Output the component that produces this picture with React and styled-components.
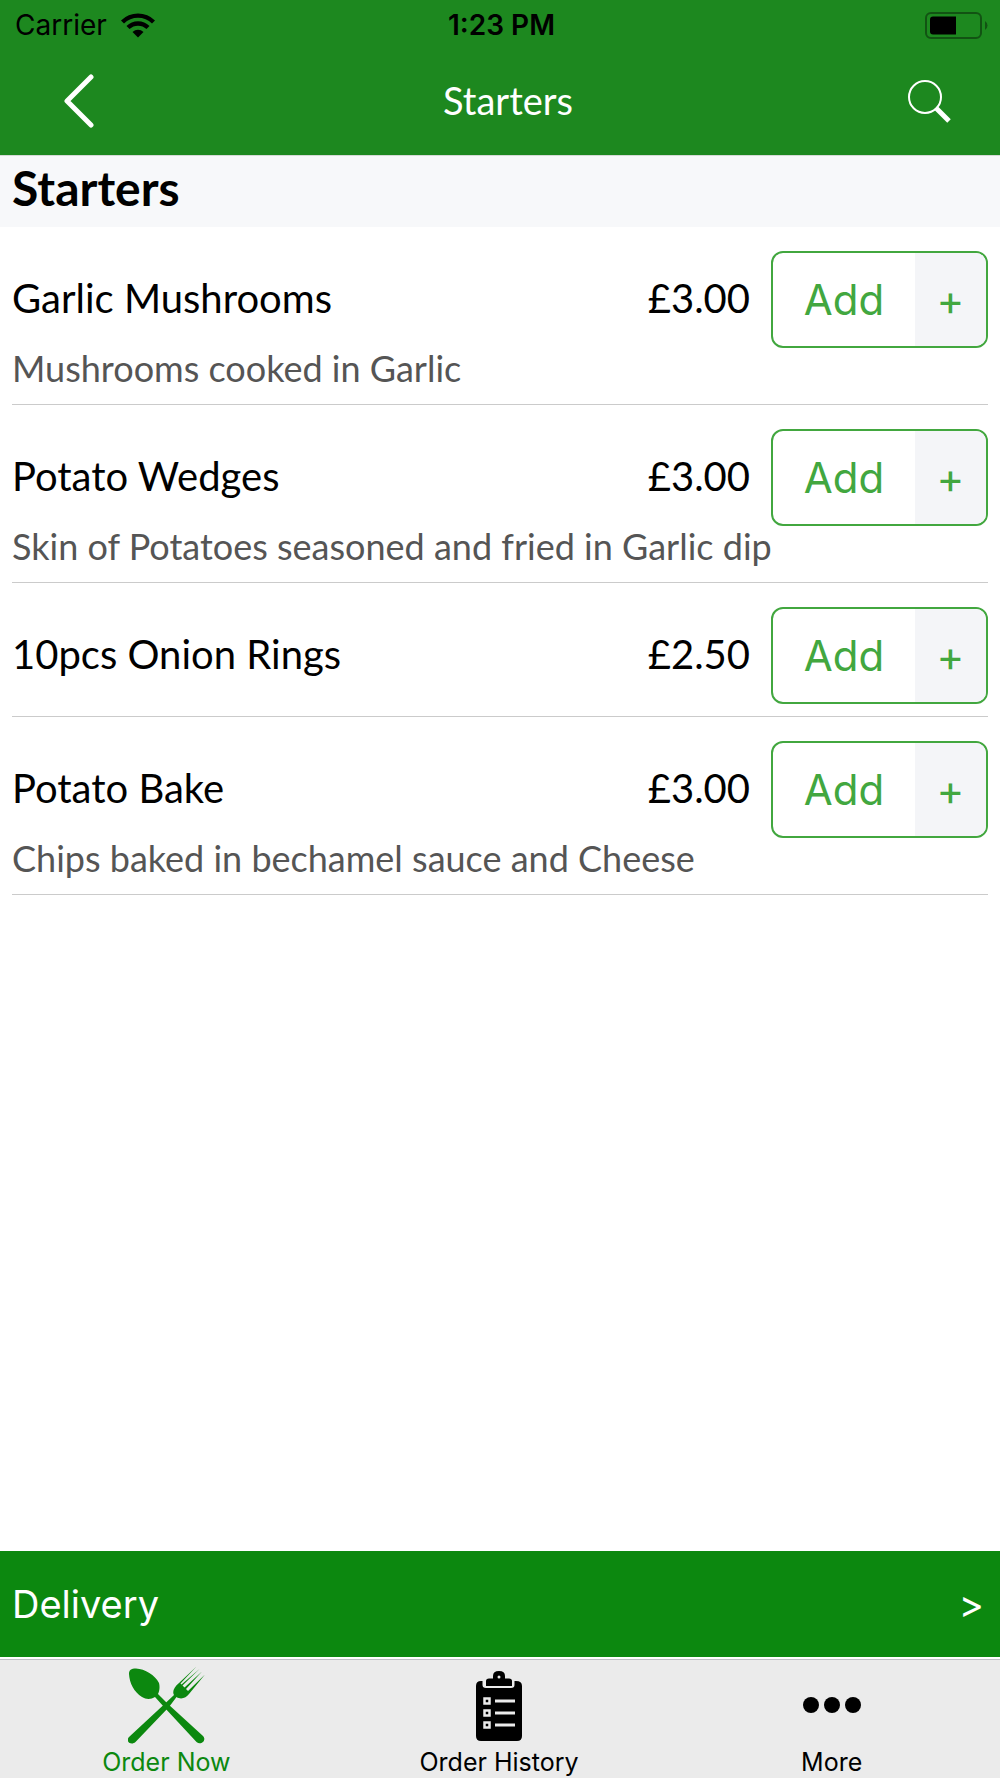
import { useState } from "react";
import styled, { createGlobalStyle } from "styled-components";

const GlobalStyle = createGlobalStyle`
  * {
    box-sizing: border-box;
  }
  body {
    margin: 0;
    background: #fff;
    color: #000;
    font-family: Lato, sans-serif;
  }
  button {
    margin: 0;
    padding: 0;
    border: 0;
    background: none;
    color: inherit;
    font-family: inherit;
    cursor: pointer;
  }
  svg {
    display: block;
  }
`

const Page = styled.div`
  display: flex;
  flex-direction: column;
  min-height: 100vh;
`
const Header = styled.header`
  background: #1d881f;
  border-bottom: 1px solid #d5dad6;
`
const StatusBar = styled.div`
  display: grid;
  grid-template-columns: 1fr auto 1fr;
  align-items: center;
  height: 51px;
  padding: 0 12px 0 15px;
  font-family: Inter, sans-serif;
  font-size: 28px;
  line-height: 51px;
`
const Carrier = styled.div`
  display: flex;
  align-items: center;
  gap: 14px;
`
const Time = styled.time`
  font-weight: 600;
`
const Battery = styled.div`
  justify-self: end;
`
const NavBar = styled.div`
  display: grid;
  grid-template-columns: 158px 1fr 142px;
  align-items: center;
  height: 104px;
  padding-bottom: 4px;
`
const NavButton = styled.button`
  display: flex;
  align-items: center;
  justify-content: center;
  height: 100%;
`
const NavTitle = styled.h1`
  margin: 0;
  padding-bottom: 2px;
  color: #fff;
  font-size: 38px;
  font-weight: 400;
  line-height: 48px;
  text-align: center;
`
const SectionTitle = styled.h2`
  margin: 0;
  padding: 0 12px 7px;
  background: #f7f8fa;
  font-size: 48px;
  font-weight: 700;
  line-height: 64px;
`
const Menu = styled.ul`
  flex: 1;
  margin: 0;
  padding: 0 12px;
  list-style: none;
`
const Item = styled.li`
  padding: 24px 0 12px;
  border-bottom: 1px solid #cbcbcb;
`
const ItemRow = styled.div`
  display: flex;
  align-items: center;
`
const ItemName = styled.h3`
  flex: 1;
  margin: 0;
  padding-bottom: 4px;
  font-size: 40px;
  font-weight: 400;
  line-height: 48px;
`
const Price = styled.span`
  margin-right: 21px;
  padding-bottom: 4px;
  font-size: 40px;
  line-height: 48px;
`
const Description = styled.p`
  margin: 0;
  padding-bottom: 3px;
  color: #555;
  font-size: 36px;
  line-height: 41px;
`
const AddButton = styled.button`
  display: grid;
  grid-template-columns: 1fr 71px;
  width: 217px;
  height: 97px;
  overflow: hidden;
  border: 2px solid #42a73f;
  border-radius: 12px;
  background: #fff;
  color: #42a73f;
  font-family: Inter, sans-serif;
  font-size: 42px;
  line-height: 93px;
`
const Plus = styled.span`
  background: #f4f5f8;
`
const DeliveryBar = styled.button`
  display: flex;
  align-items: center;
  justify-content: space-between;
  height: 106px;
  padding: 0 16px 0 12px;
  background: #0c880f;
  color: #fff;
  font-family: Inter, sans-serif;
  font-size: 38px;
`
const TabBar = styled.nav`
  display: grid;
  grid-template-columns: repeat(3, 1fr);
  margin-top: 2px;
  padding-right: 2px;
  border-top: 1px solid #bfbfc4;
  background: #ebebeb;
`
const Tab = styled.a`
  display: flex;
  flex-direction: column;
  align-items: center;
  gap: 2px;
  height: 118px;
  padding-top: 6px;
  color: ${(props) => (props.$active ? "#0c880f" : "#000")};
  font-family: Inter, sans-serif;
  font-size: 25px;
  line-height: 32px;
  text-decoration: none;
`

const starters = [
  { name: "Garlic Mushrooms", price: "£3.00", description: "Mushrooms cooked in Garlic" },
  { name: "Potato Wedges", price: "£3.00", description: "Skin of Potatoes seasoned and fried in Garlic dip" },
  { name: "10pcs Onion Rings", price: "£2.50" },
  { name: "Potato Bake", price: "£3.00", description: "Chips baked in bechamel sauce and Cheese" },
]

function WifiIcon() {
  return (
    <svg width="34" height="25" viewBox="0 0 34 25">
      <path d="M0 7.5 A24 24 0 0 1 34 7.5 L31 10.5 A20 20 0 0 0 3 10.5 Z" />
      <path d="M5.5 13 A16.5 16.5 0 0 1 28.5 13 L25.5 16 A12.5 12.5 0 0 0 8.5 16 Z" />
      <path d="M11.5 19 A8 8 0 0 1 22.5 19 L17 24.5 Z" />
    </svg>
  )
}

function BatteryIcon() {
  return (
    <svg width="63" height="28" viewBox="0 0 63 28">
      <rect x="1" y="1" width="55" height="25" rx="5" fill="none" stroke="#125313" strokeWidth="2" />
      <path d="M60 9 Q62.500 10.500 62.500 13.500 Q62.500 16.500 60 18 Z" fill="#125313" />
      <path d="M8 4.5 H31 V22.5 H8 Q5 22.5 5 19.5 V7.5 Q5 4.5 8 4.5 Z" />
    </svg>
  )
}

function BackIcon() {
  return (
    <svg width="30" height="54" viewBox="0 0 30 54" fill="none" stroke="#fff" strokeWidth="5" strokeLinecap="round" strokeLinejoin="round">
      <path d="M27 3 L3 27 L27 51" />
    </svg>
  )
}

function SearchIcon() {
  return (
    <svg width="43" height="43" viewBox="0 0 43 43" fill="none" stroke="#fff">
      <circle cx="17" cy="17" r="16" strokeWidth="2" />
      <path d="M28 28 L41 41" strokeWidth="5" />
    </svg>
  )
}

function CutleryIcon() {
  return (
    <svg width="77" height="78" viewBox="0 0 77 78" fill="currentColor">
      <path d="M1 8 C1 4 3 2.500 8 2.500 C17 3 27 9 31 17 C32 21 31.500 25 30 28 L40 38 L75 70 C79 74 73 80 68.500 76 L36 41 L27 31 C23 33.500 18 33.500 14 31 C6 26 1.500 17 1 8 Z" />
      <path d="M68.500 0.500 L51 17 C46 21 44 26 46 29 L36 38.500 L1 71 C-3 75 3 80 7.500 76 L41 41 L48.500 31 C53 34 58 32 61 28 L77 8.500 L60 25 L58 23 L74 5.500 L56.500 21.500 L54.500 19.500 L71.500 3 L53.500 18.500 L52.500 17.500 Z" />
    </svg>
  )
}

function ClipboardIcon() {
  return (
    <svg width="48" height="78" viewBox="0 -1 48 78">
      <path d="M6 14 H7.500 V18 Q7.500 21 11 21 H36 Q39.500 21 39.500 18 V14 H41 Q47 14 47 19 V69 Q47 74 42 74 H6 Q1 74 1 69 V19 Q1 14 6 14 Z" />
      <path d="M14 11.500 H18 V9 Q18 4 24 4 Q30 4 30 9 V11.500 H34 Q37 11.500 37 14 V19 H11 V14 Q11 11.500 14 11.500 Z" />
      <circle cx="24" cy="10" r="1.500" fill="#ebebeb" />
      {[34, 46, 58].map((y) => (
        <g key={y} fill="none" stroke="#ebebeb">
          <rect x="9.500" y={y - 2.5} width="5" height="5" strokeWidth="2.500" />
          <path d={`M20 ${y} H40`} strokeWidth="3" />
        </g>
      ))}
    </svg>
  )
}

function MoreIcon() {
  return (
    <svg width="60" height="78" viewBox="0 0 60 78">
      <circle cx="9" cy="39" r="8" />
      <circle cx="30" cy="39" r="8" />
      <circle cx="51" cy="39" r="8" />
    </svg>
  )
}

const tabs = [
  { label: "Order Now", Icon: CutleryIcon },
  { label: "Order History", Icon: ClipboardIcon },
  { label: "More", Icon: MoreIcon },
]

function MenuItem(props) {
  return (
    <Item>
      <ItemRow>
        <ItemName>{props.name}</ItemName>
        <Price>{props.price}</Price>
        <AddButton>
          <span>Add</span>
          <Plus>+</Plus>
        </AddButton>
      </ItemRow>
      {props.description && <Description>{props.description}</Description>}
    </Item>
  )
}

function App() {
  const [activeTab, setActiveTab] = useState("Order Now")

  const onClickTab = (event, label) => {
    event.preventDefault()
    setActiveTab(label)
  }

  return (
    <Page>
      <GlobalStyle />
      <Header>
        <StatusBar>
          <Carrier>
            <span>Carrier</span>
            <WifiIcon />
          </Carrier>
          <Time>1:23 PM</Time>
          <Battery>
            <BatteryIcon />
          </Battery>
        </StatusBar>
        <NavBar>
          <NavButton aria-label="Back">
            <BackIcon />
          </NavButton>
          <NavTitle>Starters</NavTitle>
          <NavButton aria-label="Search">
            <SearchIcon />
          </NavButton>
        </NavBar>
      </Header>
      <SectionTitle>Starters</SectionTitle>
      <Menu>
        {starters.map((item) => (
          <MenuItem key={item.name} {...item} />
        ))}
      </Menu>
      <DeliveryBar>
        <span>Delivery</span>
        <span>&gt;</span>
      </DeliveryBar>
      <TabBar>
        {tabs.map(({ label, Icon }) => (
          <Tab
            key={label}
            href="#"
            $active={label === activeTab}
            onClick={(event) => onClickTab(event, label)}
          >
            <Icon />
            <span>{label}</span>
          </Tab>
        ))}
      </TabBar>
    </Page>
  )
}

export default App
